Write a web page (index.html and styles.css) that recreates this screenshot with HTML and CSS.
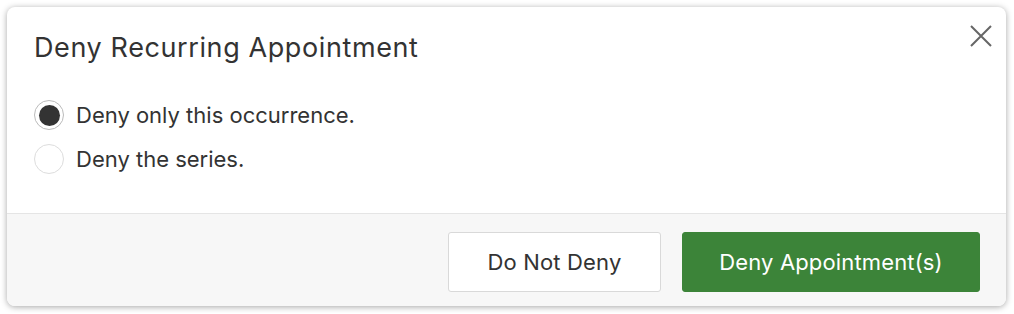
FILE: index.html
```html
<!DOCTYPE html>
<html>
<head>
<meta charset="utf-8">
<link rel="stylesheet" href="styles.css">
</head>
<body>
<div class="dialog">
  <div class="body">
    <div class="header">
      <h1 class="title">Deny Recurring Appointment</h1>
      <button class="close" aria-label="Close">
        <svg width="22" height="22" viewBox="0 0 22 22"><path d="M1 1L21 21M21 1L1 21" stroke="#666" stroke-width="2" fill="none"/></svg>
      </button>
    </div>
    <div class="options">
      <label class="option"><span class="radio checked"></span><span class="label">Deny only this occurrence.</span></label>
      <label class="option"><span class="radio"></span><span class="label">Deny the series.</span></label>
    </div>
  </div>
  <div class="footer">
    <button class="btn btn-secondary">Do Not Deny</button>
    <button class="btn btn-primary">Deny Appointment(s)</button>
  </div>
</div>
</body>
</html>
```
FILE: styles.css
```css
html, body { margin: 0; padding: 0; background: #fff; }
body { padding: 7px; font-family: Inter, "Open Sans", sans-serif; color: #333; }
.dialog {
  width: 999px; height: 299px; box-sizing: border-box;
  background: #fff; border-radius: 8px;
  box-shadow: 0 1px 6px rgba(0,0,0,0.35);
  display: flex; flex-direction: column; overflow: hidden;
}
.body { flex: 1; padding: 0 0 0 27px; }
.header { display: flex; justify-content: space-between; align-items: flex-start; }
.title { margin: 25px 0 0 0; font-size: 27px; letter-spacing: 0.6px; font-weight: 400; line-height: 32px; color: #333; }
.close { background: none; border: 0; padding: 0; margin: 18px 14px 0 0; width: 22px; height: 22px; cursor: pointer; }
.close svg { display: block; }
.options { margin-top: 36px; display: flex; flex-direction: column; gap: 14px; }
.option { display: flex; align-items: center; gap: 12px; }
.radio { width: 30px; height: 30px; border-radius: 50%; border: 1px solid #ddd; box-sizing: border-box; display: flex; align-items: center; justify-content: center; background: #fff; }
.radio.checked { border-color: #bbb; }
.radio.checked::after { content: ""; width: 21px; height: 21px; border-radius: 50%; background: #333; }
.label { font-size: 22px; line-height: 30px; }
.footer {
  height: 93px; box-sizing: border-box; background: #f7f7f7; border-top: 1px solid #e5e5e5;
  display: flex; justify-content: flex-end; align-items: flex-start; gap: 21px;
  padding: 18px 26px 0 0;
}
.btn { font-family: inherit; font-size: 22px; letter-spacing: 0.15px; height: 60px; border-radius: 3px; cursor: pointer; }
.btn-secondary { width: 213px; background: #fff; border: 1px solid #d9d9d9; color: #333; }
.btn-primary { width: 298px; background: #3c8439; border: 1px solid #3c8439; color: #fff; }
```
